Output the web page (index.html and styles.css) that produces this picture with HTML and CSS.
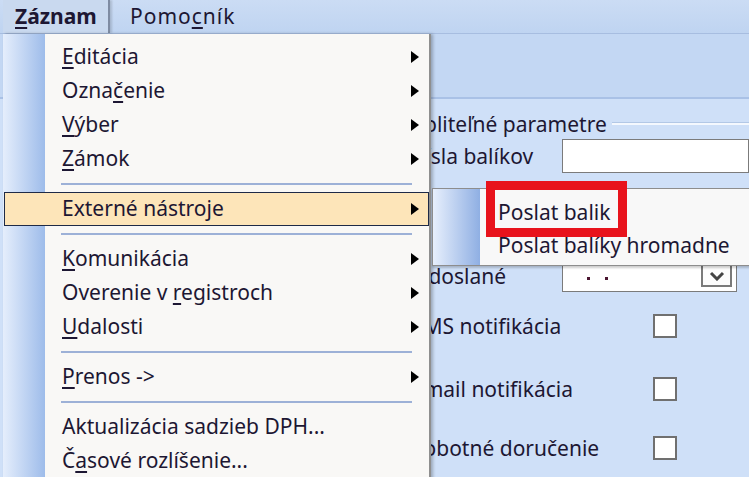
FILE: index.html
```html
<!DOCTYPE html>
<html>
    <head>
        <title>Záznam</title>
        <meta charset="UTF-8">
        <meta name="viewport" content="width=device-width, initial-scale=1.0">
        <link rel="stylesheet" href="styles.css">
    </head>
    <body>
        <div class="menubar">
            <span class="menu-title open"><u>Z</u>áznam</span>
            <span class="menu-title">Pomo<u>c</u>ník</span>
        </div>
        <div class="toolbar"></div>

        <!-- form behind the menu -->
        <div class="form">
            <div class="group-head">
                <span>Voliteľné parametre</span>
                <span class="group-line"></span>
            </div>
            <div class="row">
                <label>Čísla balíkov</label>
                <input type="text" class="text-input">
            </div>
            <div class="row row-odoslane">
                <label>Odoslané</label>
                <div class="combo">
                    <span class="combo-value"><i class="dot"></i><i class="dot"></i></span>
                    <span class="combo-btn">
                        <svg width="16" height="10" viewBox="0 0 16 10"><path d="M2 2 L8 8 L14 2" fill="none" stroke="#444" stroke-width="3"/></svg>
                    </span>
                </div>
            </div>
            <div class="row row-sms">
                <label>SMS notifikácia</label>
                <span class="check"></span>
            </div>
            <div class="row row-email">
                <label>Email notifikácia</label>
                <span class="check"></span>
            </div>
            <div class="row row-sobota">
                <label>Sobotné doručenie</label>
                <span class="check"></span>
            </div>
        </div>

        <!-- dropdown menu -->
        <div class="menu">
            <div class="item sub"><u>E</u>ditácia</div>
            <div class="item sub">Ozna<u>č</u>enie</div>
            <div class="item sub"><u>V</u>ýber</div>
            <div class="item sub"><u>Z</u>ámok</div>
            <div class="sep"></div>
            <div class="item sub active">Externé nástroje</div>
            <div class="sep"></div>
            <div class="item sub"><u>K</u>omunikácia</div>
            <div class="item sub">Overenie v <u>r</u>egistroch</div>
            <div class="item sub"><u>U</u>dalosti</div>
            <div class="sep"></div>
            <div class="item sub"><u>P</u>renos -&gt;</div>
            <div class="sep"></div>
            <div class="item">Aktualizácia sadzieb DPH...</div>
            <div class="item">Č<u>a</u>sové rozlíšenie...</div>
        </div>

        <div class="submenu">
            <div class="item">Poslat balik</div>
            <div class="item">Poslat balíky hromadne</div>
        </div>
        <div class="callout"></div>
    </body>
</html>
```

FILE: styles.css
```css
body {
    margin: 0;
    width: 749px;
    height: 477px;
    overflow: hidden;
    font-family: "Noto Sans", "Open Sans", sans-serif;
    font-size: 21px;
    color: #1d1733;
    background: #cfe0f8;
}

u {
    text-decoration-thickness: 2px;
    text-underline-offset: 3px;
}

/* top menu bar */
.menubar {
    display: flex;
    height: 34px;
    box-sizing: border-box;
    padding-left: 3px;
    background: linear-gradient(#cbdcf4, #bfd4f1);
    border-bottom: 1px solid #a7bde0;
}
.menu-title {
    padding-left: 20px;
    line-height: 33px;
    letter-spacing: 1px;
}
.menu-title.open {
    width: 107px;
    box-sizing: border-box;
    padding-left: 12px;
    letter-spacing: 0;
    font-weight: bold;
    background: #c9d9ef;
    border-right: 2px solid #7e8ba2;
    box-shadow: 2px 0 2px rgba(0, 0, 0, 0.15);
}

.toolbar {
    height: 63px;
    background: #c3d7f3;
    border-bottom: 2px solid #a9c1e6;
}

/* form in the background */
.form {
    padding: 10px 0 0 412px;
}
.group-head {
    display: flex;
    align-items: center;
    height: 30px;
    white-space: nowrap;
}
.group-line {
    flex: 1;
    height: 2px;
    margin: 0 0 2px 5px;
    background: #f4f8fe;
    border-top: 1px solid #b3c8e6;
}
.row {
    display: flex;
    align-items: center;
    height: 34px;
}
.row label {
    width: 150px;
    flex-shrink: 0;
    white-space: nowrap;
}
.text-input {
    flex: 1;
    height: 34px;
    box-sizing: border-box;
    border: 1px solid #7b7b7b;
    background: #fff;
    margin: 0;
}
.row-odoslane {
    height: 32px;
    margin-top: 87px;
}
.row-sms { margin-top: 17px; }
.row-email { margin-top: 29px; }
.row-sobota { margin-top: 25px; }

.combo {
    display: flex;
    width: 175px;
    height: 32px;
    box-sizing: border-box;
    border: 1px solid #7b7b7b;
    background: #fff;
}
.combo-value {
    flex: 1;
    display: flex;
    align-items: center;
    gap: 15px;
    padding: 4px 0 0 24px;
}
.dot {
    width: 3px;
    height: 3px;
    background: #4a1530;
}
.combo-btn {
    display: flex;
    align-items: center;
    justify-content: center;
    width: 31px;
    margin: 3px 4px 4px 0;
    box-sizing: border-box;
    border: 2px solid #7a7a7a;
    background: #fcfcfc;
}

.check {
    width: 24px;
    height: 24px;
    box-sizing: border-box;
    margin-left: 91px;
    border: 2px solid #707070;
    background: #fff;
}

/* dropdown menu */
.menu {
    position: absolute;
    left: 3px;
    top: 34px;
    width: 428px;
    height: 460px;
    padding-top: 6px;
    box-sizing: border-box;
    background: linear-gradient(to right, #e5eefc, #9ebcea) 0 0 / 42px 100% no-repeat, #f9f8f6;
    border-right: 2px solid #8f8f8f;
    box-shadow: 2px 0 3px rgba(0, 0, 0, 0.25);
}
.item {
    position: relative;
    height: 34px;
    line-height: 33px;
    box-sizing: border-box;
    padding-left: 59px;
    white-space: nowrap;
}
.item.sub::after {
    content: "";
    position: absolute;
    right: 10px;
    top: 11px;
    border-left: 8px solid #000;
    border-top: 6px solid transparent;
    border-bottom: 6px solid transparent;
}
.item.active {
    margin-left: 1px;
    padding-left: 57px;
    line-height: 31px;
    background: #fde5b9;
    border: 1px solid #1e2a47;
}
.item.active::after {
    right: 9px;
    top: 10px;
}
.sep {
    height: 2px;
    margin: 7px 17px 7px 58px;
    background: #9db1d7;
}

/* sub menu */
.submenu {
    position: absolute;
    left: 432px;
    top: 188px;
    width: 340px;
    height: 78px;
    padding-top: 7px;
    box-sizing: border-box;
    background: linear-gradient(to right, #e7effc, #8fafe3) 0 0 / 47px 100% no-repeat, #f8f8f8;
    border: 1px solid #8d8d8d;
    box-shadow: 0 2px 2px rgba(0, 0, 0, 0.2);
}
.submenu .item {
    height: 33px;
    line-height: 33px;
    padding-left: 65px;
}

.callout {
    position: absolute;
    left: 486px;
    top: 181px;
    width: 141px;
    height: 56px;
    box-sizing: border-box;
    border: 9px solid #e8131c;
}
```
